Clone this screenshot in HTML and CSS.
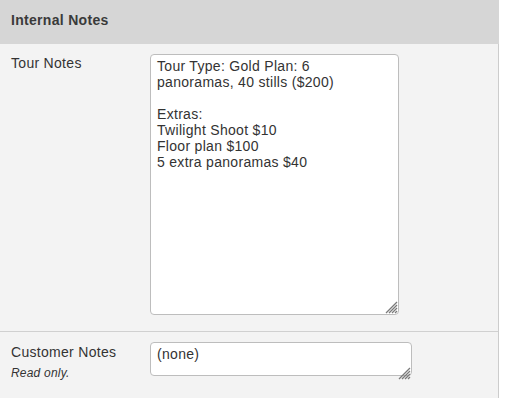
FILE: index.html
```html
<!DOCTYPE html>
<html lang="en">
<head>
    <meta charset="UTF-8">
    <title>Internal Notes</title>
    <link rel="stylesheet" href="styles.css">
</head>
<body>
    <div class="panel">
        <div class="panelHeader">Internal Notes</div>
        <div class="panelBody">
            <div class="noteRow">
                <div class="noteLabel">Tour Notes</div>
                <div class="noteField">
                    <textarea class="noteBox tourBox">Tour Type: Gold Plan: 6
panoramas, 40 stills ($200)

Extras:
Twilight Shoot $10
Floor plan $100
5 extra panoramas $40</textarea>
                    <svg class="grip" width="14" height="14" viewBox="0 0 14 14">
                        <path d="M2 13 L13 2 M5 13 L13 5 M8 13 L13 8 M11 13 L13 11" stroke="#7a7a7a" stroke-width="1.3" fill="none"/>
                    </svg>
                </div>
            </div>
            <div class="noteRow lastRow">
                <div class="noteLabel">
                    Customer Notes
                    <div class="hint">Read only.</div>
                </div>
                <div class="noteField">
                    <textarea class="noteBox customerBox" readonly>(none)</textarea>
                    <svg class="grip" width="14" height="14" viewBox="0 0 14 14">
                        <path d="M2 13 L13 2 M5 13 L13 5 M8 13 L13 8 M11 13 L13 11" stroke="#7a7a7a" stroke-width="1.3" fill="none"/>
                    </svg>
                </div>
            </div>
        </div>
    </div>
</body>
</html>
```

FILE: styles.css
```css
body {
    margin: 0;
    font-family: "Liberation Sans", Arial, sans-serif;
    font-size: 14px;
    line-height: 16px;
    letter-spacing: 0.3px;
    color: #333;
    background-color: #ffffff;
}

.panel {
    width: 499px;
}

.panelHeader {
    height: 44px;
    box-sizing: border-box;
    padding: 12px 11px;
    background-color: #d6d6d6;
    font-weight: bold;
    color: #3a3a3a;
}

.panelBody {
    background-color: #f3f3f3;
    border-right: 1px solid #cccccc;
    border-bottom: 1px solid #cccccc;
}

.noteRow {
    display: flex;
    padding: 10px 0 16px 0;
    border-bottom: 1px solid #d0d0d0;
}

.lastRow {
    border-bottom: none;
    padding-bottom: 20px;
}

.noteLabel {
    width: 139px;
    padding: 1px 0 0 11px;
}

.lastRow .noteLabel {
    padding-top: 2px;
}

.hint {
    margin-top: 5px;
    font-size: 12px;
    font-style: italic;
    letter-spacing: 0.2px;
}

.noteField {
    position: relative;
}

.noteBox {
    display: block;
    box-sizing: border-box;
    margin: 0;
    padding: 3px 6px;
    border: 1px solid #bdbdbd;
    border-radius: 4px;
    background-color: #ffffff;
    font-family: "Liberation Sans", Arial, sans-serif;
    font-size: 14px;
    line-height: 16px;
    letter-spacing: 0.3px;
    color: #333;
    overflow: hidden;
    resize: none;
}

.tourBox {
    width: 249px;
    height: 261px;
}

.customerBox {
    width: 262px;
    height: 34px;
}

.grip {
    position: absolute;
    right: 1px;
    bottom: 1px;
}
```
